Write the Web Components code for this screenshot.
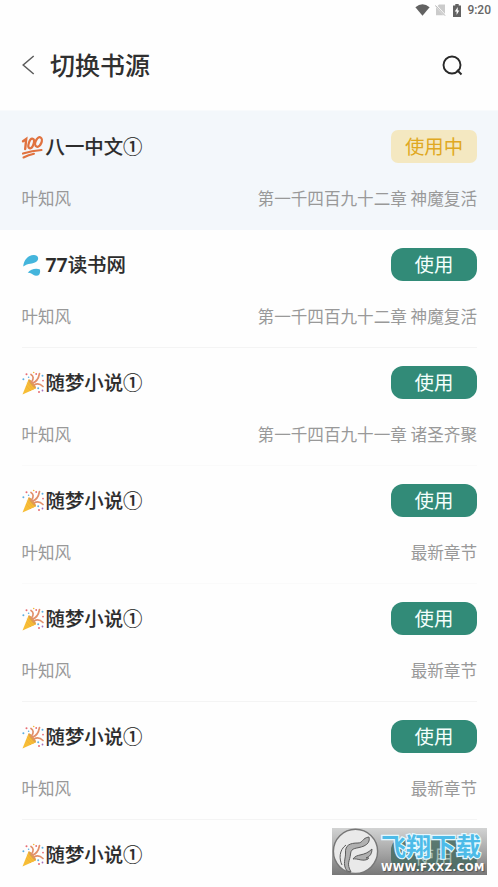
<!DOCTYPE html>
<html lang="zh-CN">
<head>
<meta charset="utf-8">
<title>切换书源</title>
<style>
html,body{margin:0;background:#fefefe}
body{width:498px;height:887px;overflow:hidden;font-family:"Noto Sans","Noto Sans CJK SC",sans-serif;color:#2c2c2c}
</style>
</head>
<body>
<source-page></source-page>
<script>
const define = (name, markup, setup) => {
  const template = document.createElement('template');
  template.innerHTML = markup;
  customElements.define(name, class extends HTMLElement {
    constructor() {
      super();
      this.attachShadow({ mode: 'open' }).append(template.content.cloneNode(true));
      if (setup) setup(this, this.shadowRoot);
    }
  });
};

define('status-bar', `
<style>
:host{display:flex;height:20px;justify-content:flex-end;align-items:center;padding-right:7px;box-sizing:border-box;font:500 12px/20px Roboto,sans-serif;color:#666}
svg{display:block}
.wifi{margin-right:5px}.sim{margin-right:7px}.bat{margin-right:6px}
</style>
<svg class="wifi" width="15" height="12" viewBox="0 0 15 12"><path d="M.4 3.2Q7.5-2.6 14.6 3.2L7.5 11.8Z" fill="#626262"/></svg>
<svg class="sim" width="11" height="12" viewBox="0 0 11 12"><path d="M4 .5H10V11.2H1V3.5Z" fill="#cbcbcb"/><path d="M0 .8L10.5 11.8" stroke="#fefefe" stroke-width="2"/><path d="M.2 1.4L10 11.6" stroke="#aaa" stroke-width="1"/></svg>
<svg class="bat" width="8" height="13" viewBox="0 0 8 13"><path d="M2.3 0H5.7V1.4H8V13H0V1.4H2.3Z" fill="#626262"/><path d="M4.7 3L1.8 7.5H3.6V11L6.3 6.5H4.7Z" fill="#fefefe"/></svg>
<span>9:20</span>`);

define('nav-bar', `
<style>
:host{display:flex;height:90px;box-sizing:border-box;padding:0 35px 0 22px;align-items:center}
svg{display:block}
h1{margin:0 auto 0 15px;padding-bottom:2px;font-size:25px;line-height:36px;font-weight:500;font-family:"Noto Sans CJK SC",sans-serif;color:#303030}
</style>
<svg width="13" height="20" viewBox="0 0 13 20"><path d="M11.7 1L1.2 10L11.7 19" fill="none" stroke="#5c5c5c" stroke-width="1.5"/></svg>
<h1><slot></slot></h1>
<svg width="21" height="21" viewBox="0 0 21 21" fill="none" stroke="#292929" stroke-width="1.9"><circle cx="10" cy="10" r="8.5"/><path d="M15 15L19.5 19.5"/></svg>`);

define('source-emoji', `
<style>:host{display:block;width:24px;height:24px;flex:none}svg{display:none;margin-left:-1px}
:host([kind=hundred]) .hundred,:host([kind=dash]) .dash,:host([kind=party]) .party{display:block}</style>
<svg class="hundred" width="24" height="24" viewBox="0 0 24 24" fill="none" stroke="#e0723f" stroke-linecap="round">
<path d="M2 6.3L5.2 4L4.2 14" stroke-width="2.4"/><ellipse cx="10.2" cy="8.5" rx="2.4" ry="5" transform="rotate(18 10.2 8.5)" stroke-width="2.3"/><ellipse cx="17.5" cy="7" rx="2.9" ry="5" transform="rotate(24 17.5 7)" stroke-width="2.3"/><path d="M2 18.6Q11 15.7 20.5 15" stroke-width="2.1"/><path d="M2.5 22.5Q7.5 19.8 13 18.7" stroke-width="2"/></svg>
<svg class="dash" width="24" height="24" viewBox="0 0 24 24"><path d="M2.2 13.6C2.8 7 7.2 1.7 13 2C17.4 2.3 18.6 6.2 15.3 8.7C11.8 11.3 7.2 9.7 2.2 13.6Z" fill="#44b5dc"/><path d="M6.7 19.8C9.5 16 15 14.8 19 16.4Q20 22.7 15 22.7C12 22.7 10.8 19.3 6.7 19.8Z" fill="#44b5dc"/></svg>
<svg class="party" width="24" height="24" viewBox="0 0 24 24"><path d="M1.5 23.5L7.5 8.5Q13.5 11.5 14.8 17.6Z" fill="#f7bd35"/><path d="M5 15L10 20M6.3 11.8L12.2 18.7" stroke="#f1b03a" stroke-width="1"/><ellipse cx="11.2" cy="12.9" rx="1.5" ry="5.7" transform="rotate(-39 11.2 12.9)" fill="#dfa04a"/>
<g fill="none" stroke="#e2906b" stroke-width="1.7" stroke-linecap="round"><path d="M10.5 11C13 8 12.5 5 10 3.5"/><path d="M11.5 12Q17 10.5 18.5 2.5"/><path d="M13 14Q17.5 11 22 15.5"/></g>
<g fill="#e76c73"><circle cx="5.5" cy="3.3" r="1"/><circle cx="15.2" cy="3" r=".9"/><circle cx="22" cy="9.6" r=".9"/><circle cx="18" cy="21" r="1"/></g><g fill="#5daee1"><circle cx="2.4" cy="8.3" r="1"/><circle cx="21.5" cy="4.8" r="1"/><circle cx="17.2" cy="17.3" r="1"/><circle cx="7.6" cy="6.2" r=".8"/></g><circle cx="21.5" cy="19.5" r=".9" fill="#a66fbc"/><circle cx="12.7" cy="1.5" r=".8" fill="#f4b83a"/></svg>`);

define('use-button', `
<style>
:host{display:block}
button{display:block;width:86px;height:33px;padding:0 0 1px;border:0;border-radius:12px;background:#328b78;color:#f4fffc;font:400 19.4px/32px "Noto Sans CJK SC",sans-serif;text-align:center}
:host([active]) button{background:#f4e8c1;color:#e0a822;border-radius:7px}
</style>
<button><slot></slot></button>`);

define('source-row', `
<style>
:host{display:block;height:118px;box-sizing:border-box;padding:18px 21px 0 21.5px}
:host([active]){height:120px;background:#f3f7fb;border-top:1px solid #f8fafc;padding-top:19px}
.box{height:100px;box-sizing:border-box;border-bottom:1px solid #f4f4f4}
:host([soft]) .box{border-color:#fafafa}
:host([active]) .box{border:0}
.top,.bottom{display:flex;align-items:center;justify-content:space-between}
.top{height:33px}
.name{display:flex;align-items:center;font-size:19.4px}
.name b{font-family:"Noto Sans CJK SC",sans-serif;font-weight:500;line-height:30px;padding-bottom:2px;-webkit-text-stroke:.12px #2c2c2c}
.bottom{margin-top:22px;height:26px;font:400 16.5px/26px "Noto Sans CJK SC",sans-serif;color:#999}
.bottom slot[name=chapter]{font-size:16.6px}
</style>
<div class="box">
<div class="top"><div class="name"><slot name="icon"></slot><b><slot></slot></b></div><slot name="action"></slot></div>
<div class="bottom"><span><slot name="author"></slot></span><span><slot name="chapter"></slot></span></div>
</div>`);

define('download-badge', `
<style>
:host{display:block;position:absolute;left:332px;top:828px;width:155px;height:47px;overflow:hidden;background:linear-gradient(#d2d3d3,#a3a3a3 55%,#777)}
.logo{position:absolute;left:0;top:0}
.under{position:absolute;left:59px;top:10px;width:86px;height:33px;border-radius:12px;background:#42685ecc;color:#a3bbb2;font:19.4px/36px "Noto Sans CJK SC",sans-serif;text-align:center}
.brand{position:absolute;left:49px;top:0;font:700 25px/34px "Noto Sans CJK SC",sans-serif;color:#4dbbe8;-webkit-text-stroke:2.4px #e3f8ff;paint-order:stroke fill;white-space:nowrap}
.url{position:absolute;left:49px;top:32px;font:700 10.4px/14px "DejaVu Sans",sans-serif;letter-spacing:.4px;color:#fff;white-space:nowrap;text-shadow:1px 1px 1px #555}
</style>
<div class="under">使用</div>
<svg class="logo" width="48" height="47" viewBox="0 0 48 47"><circle cx="23.5" cy="23.3" r="22.1" fill="#e9e9e9" stroke="#777" stroke-width="1.4"/>
<g fill="#b0b0b0" stroke="#5c5c5c" stroke-width="1" stroke-linejoin="round"><path d="M15 43C10 36 14 30 13.5 25C13 17 18 15 26 15C31 15 30 10 37 9Q38.5 15 32 18C25 21 19 19 18.5 26C18 33 14 35 19 44Z"/><path d="M21 31C25 25 32 29 40 21Q40 28 34 30Q38 29 36 31C31 34 25 30 21 31Z"/><path d="M10 37C7 31 7 22 14 17" fill="none"/></g></svg>
<div class="brand">飞翔下载</div><div class="url">WWW.FXXZ.COM</div>`);

define('source-page', `
<style>:host{display:block;position:relative;width:498px;height:887px;overflow:hidden}main{height:765px;overflow:hidden}</style>
<status-bar></status-bar>
<nav-bar>切换书源</nav-bar>
<main></main>
<download-badge></download-badge>`, (host, root) => {
  const party = ['party', '随梦小说①', '最新章节'];
  const rows = [
    ['hundred', '八一中文①', '第一千四百九十二章 神魔复活'],
    ['dash', '<span style="font-family:Noto Sans;font-weight:600;line-height:1">77</span>读书网', '第一千四百九十二章 神魔复活'],
    ['party', '随梦小说①', '第一千四百九十一章 诸圣齐聚'],
    party, party, party
  ];
  const main = root.querySelector('main');
  main.innerHTML = rows.map(([kind, name, chapter], i) => `
    <source-row ${i ? '' : 'active'} ${i === 2 || i === 3 ? 'soft' : ''}><source-emoji slot="icon" kind="${kind}"></source-emoji>${name}
    <use-button slot="action" ${i ? '' : 'active'}>${i ? '使用' : '使用中'}</use-button>
    <span slot="author">叶知风</span><span slot="chapter">${chapter}</span></source-row>`).join('') +
    '<source-row><source-emoji slot="icon" kind="party"></source-emoji>随梦小说①</source-row>';
});
</script>
</body>
</html>
